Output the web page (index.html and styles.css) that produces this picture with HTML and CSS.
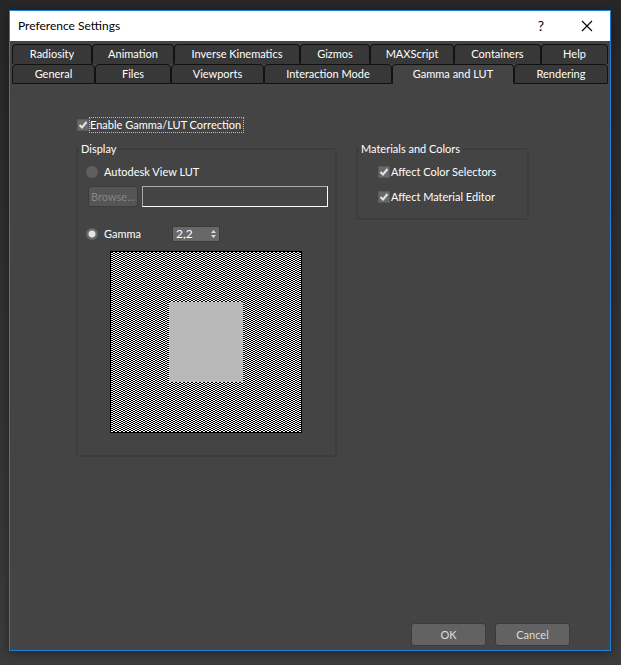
FILE: index.html
```html
<!DOCTYPE html>
<html lang="en">
<head>
  <meta charset="UTF-8">
  <meta name="viewport" content="width=device-width, initial-scale=1.0">
  <title>Preference Settings</title>
  <link rel="stylesheet" href="styles.css">
</head>
<body>
  <form class="dialog">
    <header class="titlebar">
      <h1>Preference Settings</h1>
      <button type="button" class="title-button" aria-label="Help">?</button>
      <button type="button" class="title-button" aria-label="Close">
        <svg width="12" height="12" viewBox="0 0 12 12"><path d="M1 1L11 11M11 1L1 11" stroke="#000" stroke-width="1.1" fill="none"/></svg>
      </button>
    </header>

    <nav class="tabs" role="tablist">
      <div class="tab-row tab-row-back">
        <button type="button" role="tab">Radiosity</button>
        <button type="button" role="tab">Animation</button>
        <button type="button" role="tab">Inverse Kinematics</button>
        <button type="button" role="tab">Gizmos</button>
        <button type="button" role="tab">MAXScript</button>
        <button type="button" role="tab">Containers</button>
        <button type="button" role="tab">Help</button>
      </div>
      <div class="tab-row tab-row-front">
        <button type="button" role="tab">General</button>
        <button type="button" role="tab">Files</button>
        <button type="button" role="tab">Viewports</button>
        <button type="button" role="tab">Interaction Mode</button>
        <button type="button" role="tab" class="active" aria-selected="true">Gamma and LUT</button>
        <button type="button" role="tab">Rendering</button>
      </div>
    </nav>

    <main class="page">
      <label class="check">
        <input type="checkbox" checked>
        <span class="focused">Enable Gamma/LUT Correction</span>
      </label>

      <div class="groups">
        <fieldset>
          <legend>Display</legend>
          <div class="display">
            <label class="radio"><input type="radio" name="mode"> Autodesk View LUT</label>
            <div class="file-row">
              <button type="button" class="button browse" disabled>Browse...</button>
              <input type="text" class="path" aria-label="LUT file">
            </div>
            <div class="gamma-row">
              <label class="radio"><input type="radio" name="mode" checked> Gamma</label>
              <div class="spinner">
                <input type="text" value="2,2" aria-label="Gamma value">
                <svg width="7" height="10" viewBox="0 0 7 10"><path d="M1 4L3.5 1L6 4ZM1 6L3.5 9L6 6Z" fill="#ddd"/></svg>
              </div>
            </div>
            <div class="preview">
              <div class="preview-gray"></div>
            </div>
          </div>
        </fieldset>

        <fieldset>
          <legend>Materials and Colors</legend>
          <div class="materials">
            <label class="check"><input type="checkbox" checked> <span>Affect Color Selectors</span></label>
            <label class="check"><input type="checkbox" checked> <span>Affect Material Editor</span></label>
          </div>
        </fieldset>
      </div>
    </main>

    <footer class="actions">
      <button type="submit" class="button">OK</button>
      <button type="button" class="button">Cancel</button>
    </footer>
  </form>
</body>
</html>
```
FILE: styles.css
```css
* {
  box-sizing: border-box;
}

body {
  display: flex;
  min-height: 100vh;
  margin: 0;
  padding: 10px 10px 14px 9px;
  background: linear-gradient(#272727, #3c3c3c);
  color: #fff;
  font: 11px/14px Lato, Tahoma, sans-serif;
}

button, input {
  margin: 0;
  padding: 0;
  font: inherit;
  color: inherit;
}

.dialog {
  display: flex;
  flex: 1;
  flex-direction: column;
  border: 1px solid #1a80d8;
  background: #444;
  box-shadow: 0 2px 10px rgba(0, 0, 0, 0.4);
}

/* Title bar */
.titlebar {
  display: flex;
  align-items: center;
  height: 30px;
  padding-left: 8px;
  background: #fff;
  color: #000;
}

.titlebar h1 {
  flex: 1;
  margin: 0;
  font-size: 12px;
  font-weight: normal;
}

.title-button {
  display: flex;
  align-items: center;
  justify-content: center;
  width: 46px;
  height: 30px;
  border: 0;
  background: none;
  font-size: 14px;
}

/* Tabs */
.tabs {
  padding: 3px 2px 0;
}

.tab-row {
  display: grid;
  height: 20px;
}

.tab-row-back {
  grid-template-columns: 80fr 82fr 126fr 70fr 84fr 87fr 67fr;
}

.tab-row-front {
  grid-template-columns: 83fr 76fr 93fr 128fr 122fr 94fr;
}

.tab-row button {
  padding-bottom: 1px;
  border: 1px solid #111;
  border-radius: 4px 4px 0 0;
  background: #383838;
  white-space: nowrap;
}

.tab-row-back button {
  border-bottom-color: #383838;
}

.tab-row .active {
  border-bottom-color: #444;
  background: #444;
}

/* Page */
.page {
  flex: 1;
  padding: 34px 81px 0 66px;
}

.check {
  display: flex;
  align-items: center;
}

.check input {
  appearance: none;
  width: 12px;
  height: 12px;
  margin-right: 1px;
  border: 1px solid #5a5a5a;
  background: #686868;
}

.check input:checked {
  background: #686868 url("data:image/svg+xml,%3Csvg xmlns='http://www.w3.org/2000/svg' viewBox='0 0 10 10'%3E%3Cpath d='M1.5 5L4 7.5L8.5 2' fill='none' stroke='%23e4e4e4' stroke-width='2'/%3E%3C/svg%3E");
}

.page > .check {
  margin-left: 1px;
}

.focused {
  padding-right: 2px;
  outline: 1px dotted #bbb;
}

.groups {
  display: grid;
  grid-template-columns: 261fr 173fr;
  gap: 19px;
  align-items: start;
  margin-top: 10px;
}

fieldset {
  min-width: 0;
  margin: 0;
  padding: 0;
  border: 2px solid #3d3d3d;
  border-radius: 3px;
}

legend {
  margin-left: 1px;
  padding: 0 2px;
}

.display {
  padding: 9px 7px 22px 8px;
}

.materials {
  display: grid;
  gap: 11px;
  padding: 9px 8px 14px 20px;
}

.radio {
  display: flex;
  align-items: center;
  gap: 6px;
}

.radio input {
  appearance: none;
  width: 12px;
  height: 12px;
  border-radius: 50%;
  background: #5f5f5f;
}

.radio input:checked {
  background: radial-gradient(circle, #e4e4e4 3px, #666 4px);
}

.file-row {
  display: flex;
  gap: 4px;
  margin-top: 7px;
  padding-left: 2px;
}

.button {
  border: 1px solid #3b3b3b;
  border-radius: 3px;
  background: #626262;
  color: #ddd;
}

.browse {
  width: 50px;
  background: #555;
  color: #858585;
}

.path {
  flex: 1;
  min-width: 0;
  height: 21px;
  border: 1px solid #fff;
  border-top-color: #aaa;
  border-left-color: #aaa;
  background: #444;
}

.gamma-row {
  display: flex;
  align-items: center;
  margin-top: 19px;
}

.gamma-row .radio {
  width: 86px;
}

.spinner {
  display: flex;
  align-items: center;
  width: 48px;
  height: 16px;
  padding: 0 2px 0 3px;
  border: 1px solid #3b3b3b;
  background: #686868;
}

.spinner input {
  flex: 1;
  min-width: 0;
  border: 0;
  background: none;
  font-size: 12px;
}

/* 2x1 pixel checker around a flat gray patch */
.preview {
  display: flex;
  align-items: center;
  justify-content: center;
  width: 192px;
  height: 182px;
  margin: 9px 0 0 24px;
  border: 1px solid #000;
  background: repeating-conic-gradient(#fff 0 25%, #000 0 50%) 0 0 / 4px 2px;
}

.preview-gray {
  width: 74px;
  height: 80px;
  background: #b9b9b9;
}

/* OK / Cancel */
.actions {
  display: flex;
  justify-content: flex-end;
  gap: 9px;
  padding: 0 40px 4px 0;
}

.actions .button {
  width: 75px;
  height: 23px;
}
```
